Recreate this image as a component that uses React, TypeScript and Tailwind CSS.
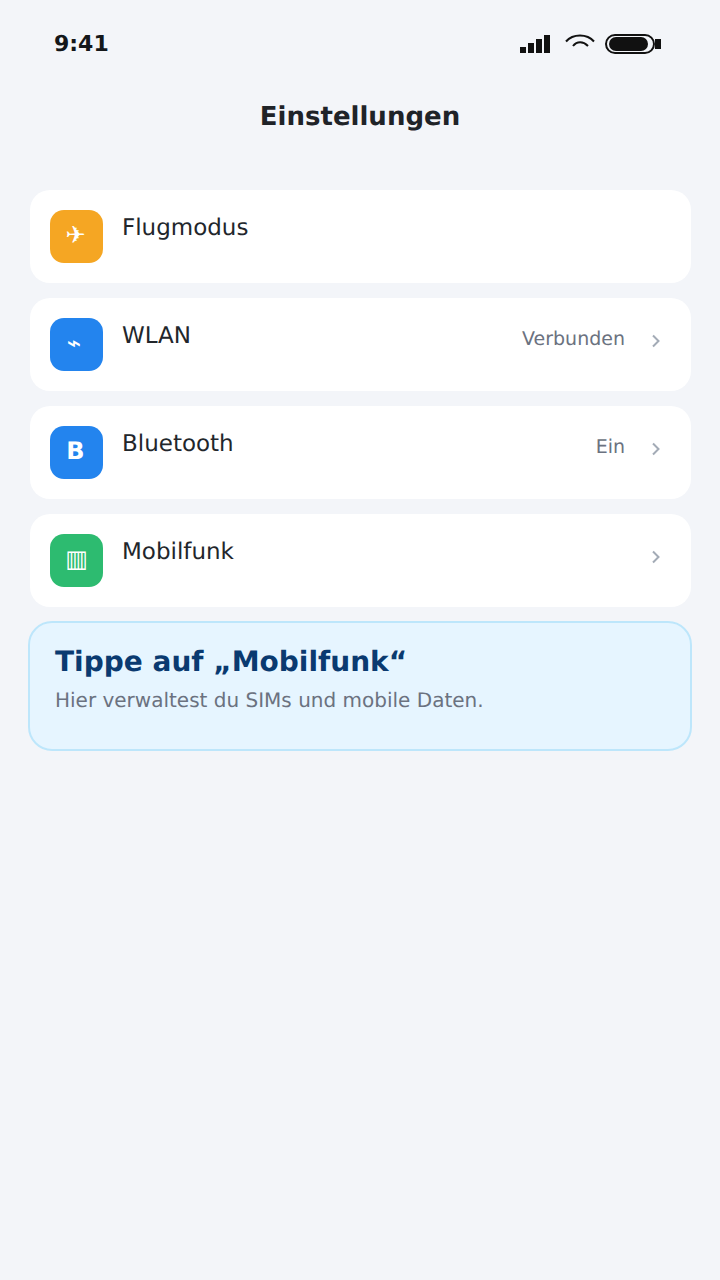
const font = { fontFamily: '"DejaVu Sans", sans-serif' };

function Row({ color, glyph, glyphClass, label, value, chevron }: { color: string; glyph: string; glyphClass: string; label: string; value?: string; chevron?: boolean }) {
  return (
    <div className="flex h-[93px] items-start rounded-[20px] bg-white pl-[20px] pr-[30px] pt-[20px]">
      <div className={`flex h-[53px] w-[53px] shrink-0 items-center justify-center rounded-[14px] pb-[3px] text-white ${color} ${glyphClass}`}>{glyph}</div>
      <div className="ml-[19px] mt-[3px] text-[23px] leading-[30px] text-[#22262b]">{label}</div>
      <div className="ml-auto flex h-[42px] items-center">
        {value && <span className="text-[19px] text-[#6b7280]">{value}</span>}
        {chevron && (
          <svg width="10" height="14" viewBox="0 0 10 14" className="ml-[26px] mt-[3px]" fill="none" stroke="#a3abb6" strokeWidth="2">
            <path d="M2 1.5 L7.5 7 L2 12.5" />
          </svg>
        )}
      </div>
    </div>
  );
}

export default function App() {
  return (
    <div className="min-h-[1280px] bg-[#f3f5f9] [text-rendering:geometricPrecision]" style={font}>
      <div className="flex h-[88px] items-center justify-between pl-[54px] pr-[59px]">
        <span className="text-[22px] font-bold text-[#14171a]">9:41</span>
        <div className="flex items-center">
          <svg width="30" height="18" viewBox="0 0 30 18" fill="#111">
            <rect x="0" y="12" width="6" height="6" />
            <rect x="8" y="8" width="6" height="10" />
            <rect x="16" y="4" width="6" height="14" />
            <rect x="24" y="0" width="6" height="18" />
          </svg>
          <svg width="30" height="18" viewBox="0 0 30 18" className="ml-[15px] mb-[6px]" fill="none" stroke="#111" strokeWidth="2">
            <path d="M1 9.5 C8 1.5 22 1.5 29 9.5" />
            <path d="M8 14 C12 9 18 9 23 14" />
          </svg>
          <div className="ml-[10px] flex items-center">
            <div className="h-[20px] w-[50px] rounded-[10px] border-2 border-[#111] bg-[#f3f5f9] p-[1px] pl-[2px]">
              <div className="h-full w-[39px] rounded-[7px] bg-[#111]" />
            </div>
            <div className="h-[10px] w-[6px] bg-[#111]" />
          </div>
        </div>
      </div>
      <h1 className="mt-[12px] text-center text-[26px] font-bold leading-[34px] text-[#1f2328]">Einstellungen</h1>
      <div className="mx-[30px] mt-[56px] flex w-[661px] flex-col gap-[15px]">
        <Row color="bg-[#f5a623]" glyph="✈" glyphClass="pr-[2px] text-[24px]" label="Flugmodus" />
        <Row color="bg-[#2384ee]" glyph="⌁" glyphClass="pr-[5px] text-[24px] font-bold" label="WLAN" value="Verbunden" chevron />
        <Row color="bg-[#2384ee]" glyph="B" glyphClass="pr-[2px] text-[24px] font-bold" label="Bluetooth" value="Ein" chevron />
        <Row color="bg-[#2dbb70]" glyph="▥" glyphClass="text-[24px]" label="Mobilfunk" chevron />
      </div>
      <div className="mx-[28px] mt-[14px] h-[130px] rounded-[24px] border-2 border-[#bde6fb] bg-[#e6f5ff] pl-[25px] pt-[21px]">
        <div className="text-[28px] font-bold leading-[36px] text-[#0a3a70]">Tippe auf „Mobilfunk“</div>
        <div className="mt-[6px] text-[20px] leading-[28px] text-[#6b7280]">Hier verwaltest du SIMs und mobile Daten.</div>
      </div>
    </div>
  );
}
